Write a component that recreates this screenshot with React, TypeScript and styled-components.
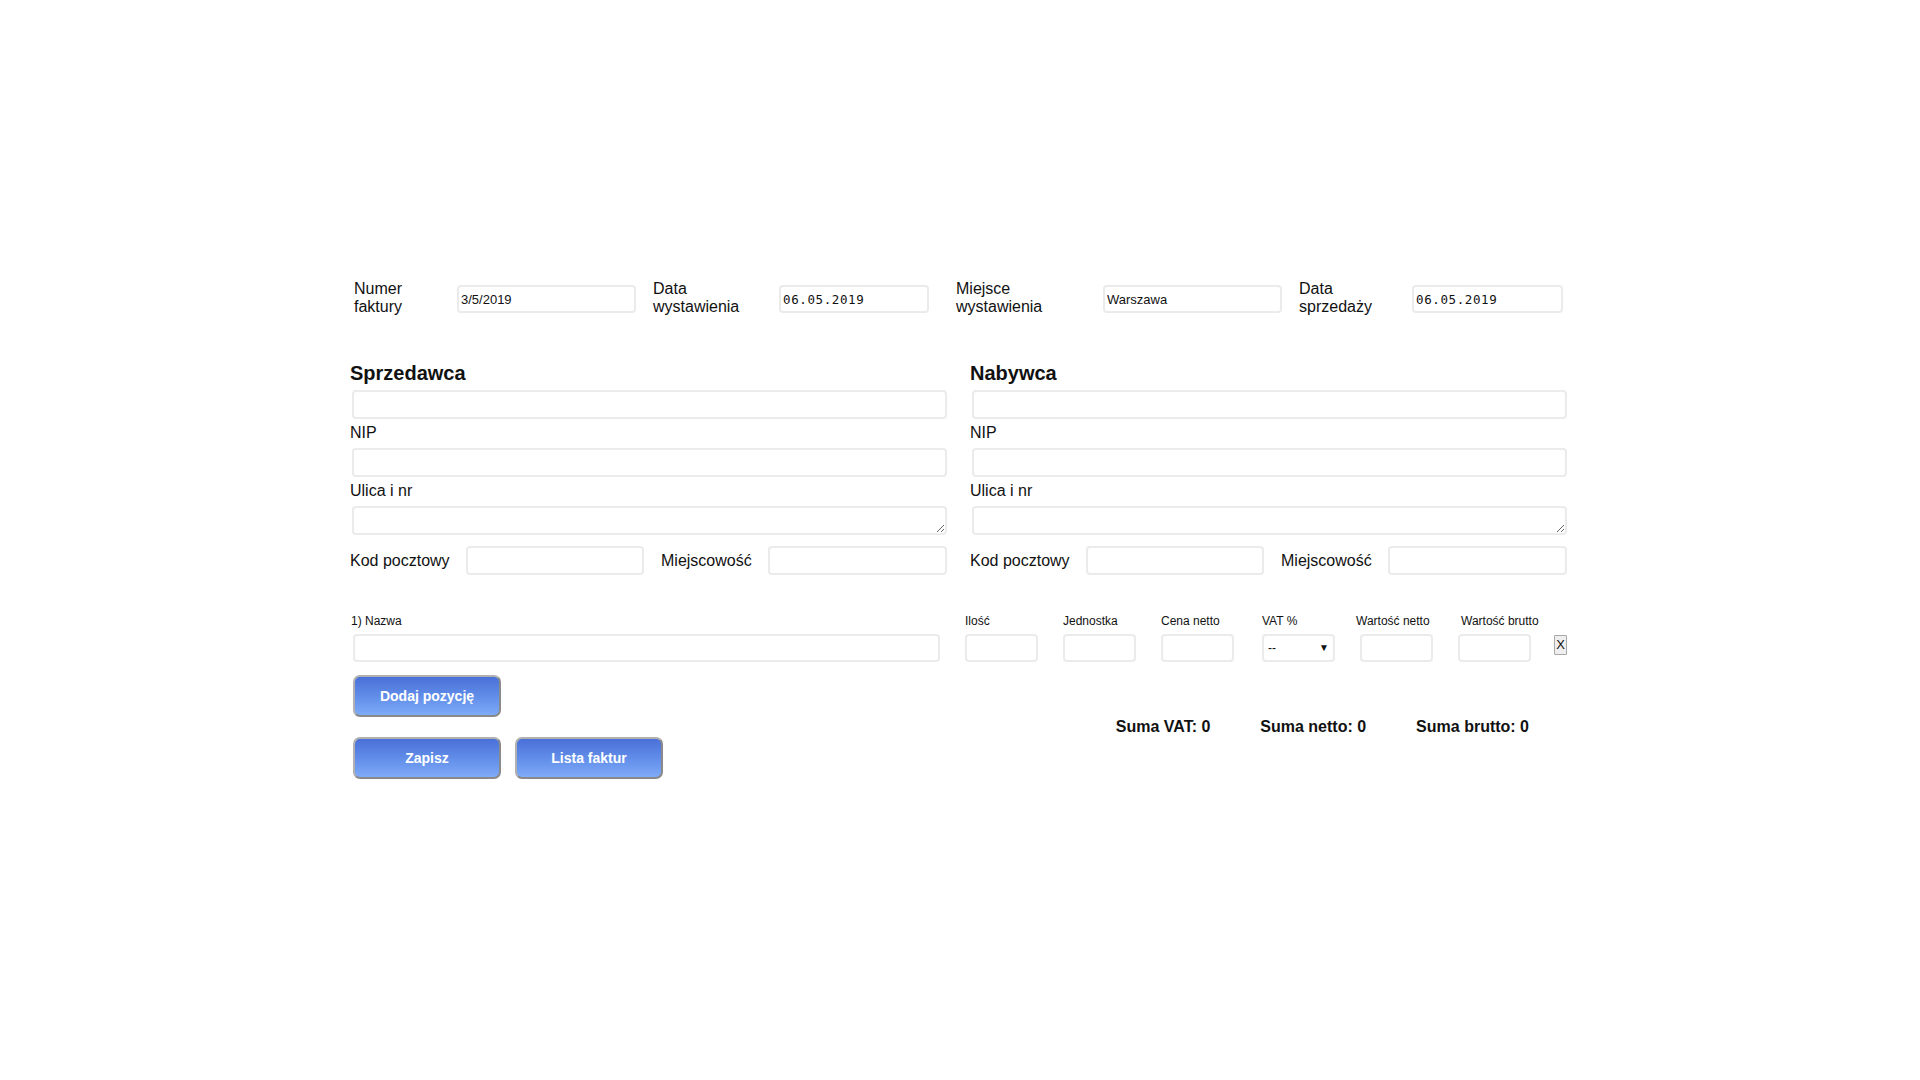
import React from "react";
import styled, { createGlobalStyle, css } from "styled-components";

const GlobalStyle = createGlobalStyle`
  html, body { margin: 0; padding: 0; background: #ffffff; }
  body { font-family: "Liberation Sans", Arial, sans-serif; color: #111111; }
  * { box-sizing: border-box; }
`;

const Page = styled.div`
  width: 1220px;
  margin: 0 auto;
  padding-top: 279px;
`;

const fieldBase = css`
  border: 2px solid #ebebeb;
  border-radius: 4px;
  background: #ffffff;
  color: #111111;
  font-family: "Liberation Sans", Arial, sans-serif;
  font-size: 13px;
  padding: 1px 2px;
  outline: none;
  min-width: 0;
`;

/* ---------- top row ---------- */
const TopRow = styled.div`
  display: flex;
  align-items: center;
  padding-left: 4px;
  height: 36px;
`;

const TopLabel = styled.label<{ $w: number }>`
  flex: 0 0 ${(p) => p.$w}px;
  width: ${(p) => p.$w}px;
  font-size: 16px;
  line-height: 18px;
  padding-top: 2px;
`;

const TopInput = styled.input<{ $w: number; $mono?: boolean; $after?: number }>`
  ${fieldBase};
  flex: 0 0 ${(p) => p.$w}px;
  width: ${(p) => p.$w}px;
  height: 28px;
  margin-top: 4px;
  margin-right: ${(p) => p.$after ?? 0}px;
  ${(p) =>
    p.$mono &&
    css`
      font-family: "DejaVu Sans Mono", "Liberation Mono", monospace;
      font-size: 12.5px;
      letter-spacing: 0.6px;
      padding-left: 2px;
    `}
`;

/* ---------- parties ---------- */
const Parties = styled.div`
  display: grid;
  grid-template-columns: 598px 598px;
  column-gap: 22px;
  margin-top: 47px;
`;

const Party = styled.section`
  display: flex;
  flex-direction: column;
`;

const Heading = styled.h2`
  margin: 0 0 5px 0;
  font-size: 20px;
  line-height: 23px;
  font-weight: bold;
`;

const FieldLabel = styled.label`
  display: block;
  font-size: 16px;
  line-height: 18px;
  margin: 5px 0 6px 0;
`;

const WideInput = styled.input`
  ${fieldBase};
  display: block;
  width: 595px;
  height: 29px;
  margin-left: 2px;
`;

const WideArea = styled.textarea`
  ${fieldBase};
  display: block;
  width: 595px;
  height: 29px;
  margin-left: 2px;
  resize: vertical;
`;

const CityRow = styled.div`
  display: flex;
  align-items: center;
  margin-top: 11px;
`;

const InlineLabel = styled.label<{ $w: number }>`
  flex: 0 0 ${(p) => p.$w}px;
  width: ${(p) => p.$w}px;
  font-size: 16px;
  line-height: 18px;
`;

const SmallInput = styled.input<{ $w: number; $after?: number }>`
  ${fieldBase};
  flex: 0 0 ${(p) => p.$w}px;
  width: ${(p) => p.$w}px;
  height: 29px;
  margin-right: ${(p) => p.$after ?? 0}px;
`;

/* ---------- items ---------- */
const ItemsRow = styled.div`
  display: flex;
  gap: 25px;
  margin-top: 39px;
  padding-left: 1px;
`;

const ItemCol = styled.div<{ $w: number; $shift?: number }>`
  display: flex;
  flex-direction: column;
  flex: 0 0 ${(p) => p.$w}px;
  width: ${(p) => p.$w}px;
  margin-left: ${(p) => p.$shift ?? 0}px;
`;

const ItemLabel = styled.label<{ $nudge?: number }>`
  font-size: 12px;
  line-height: 14px;
  height: 14px;
  margin-bottom: 6px;
  white-space: nowrap;
  margin-left: ${(p) => p.$nudge ?? 0}px;
`;

const ItemInput = styled.input<{ $indent?: number }>`
  ${fieldBase};
  height: 28px;
  width: 100%;
  margin-left: ${(p) => p.$indent ?? 0}px;
`;

const NameInput = styled(ItemInput)`
  width: 587px;
`;

const SelectWrap = styled.div`
  position: relative;
  width: 100%;
  height: 28px;
`;

const VatSelect = styled.select`
  ${fieldBase};
  appearance: none;
  -webkit-appearance: none;
  width: 100%;
  height: 28px;
  font-size: 12px;
  padding-left: 4px;
`;

const Caret = styled.span`
  position: absolute;
  right: 6px;
  top: 8px;
  font-size: 10px;
  line-height: 12px;
  color: #111;
  pointer-events: none;
`;

const RemoveButton = styled.button`
  margin-top: 1px;
  width: 13px;
  height: 20px;
  padding: 0;
  font-family: "Liberation Sans", Arial, sans-serif;
  font-size: 13px;
  line-height: 16px;
  color: #111;
  background: #efefef;
  border: 1px solid #a8a8a8;
  border-radius: 1px;
`;

/* ---------- buttons & sums ---------- */
const BlueButton = styled.button`
  width: 148px;
  height: 42px;
  border: 2px solid #b0b0b0;
  border-right-color: #8a8a8a;
  border-bottom-color: #8a8a8a;
  border-radius: 7px;
  background: linear-gradient(to bottom, #4a70d8 0%, #6390ea 55%, #7eaaf8 100%);
  color: #ffffff;
  font-family: "Liberation Sans", Arial, sans-serif;
  font-weight: bold;
  font-size: 14px;
  cursor: pointer;
`;

const AddRow = styled.div`
  margin-top: 13px;
  padding-left: 3px;
`;

const SumsRow = styled.div`
  display: flex;
  justify-content: flex-end;
  gap: 50px;
  height: 20px;
  padding-top: 1px;
  padding-right: 41px;
`;

const Sum = styled.span`
  font-size: 16px;
  font-weight: bold;
  line-height: 18px;
`;

const ActionsRow = styled.div`
  display: flex;
  gap: 14px;
  padding-left: 3px;
`;

const PartyForm: React.FC<{ title: string }> = ({ title }) => (
  <Party>
    <Heading>{title}</Heading>
    <WideInput />
    <FieldLabel>NIP</FieldLabel>
    <WideInput />
    <FieldLabel>Ulica i nr</FieldLabel>
    <WideArea rows={1} />
    <CityRow>
      <InlineLabel $w={116}>Kod pocztowy</InlineLabel>
      <SmallInput $w={178} $after={17} />
      <InlineLabel $w={107}>Miejscowość</InlineLabel>
      <SmallInput $w={179} />
    </CityRow>
  </Party>
);

const columns = ["Ilość", "Jednostka", "Cena netto"];
const valueColumns: { label: string; nudge: number }[] = [
  { label: "Wartość netto", nudge: -4 },
  { label: "Wartość brutto", nudge: 3 },
];

export default function App() {
  return (
    <>
      <GlobalStyle />
      <Page>
        <TopRow>
          <TopLabel $w={103}>
            Numer
            <br />
            faktury
          </TopLabel>
          <TopInput $w={179} $after={17} defaultValue="3/5/2019" />
          <TopLabel $w={126}>
            Data
            <br />
            wystawienia
          </TopLabel>
          <TopInput $w={150} $after={27} $mono defaultValue="06.05.2019" />
          <TopLabel $w={147}>
            Miejsce
            <br />
            wystawienia
          </TopLabel>
          <TopInput $w={179} $after={17} defaultValue="Warszawa" />
          <TopLabel $w={113}>
            Data
            <br />
            sprzedaży
          </TopLabel>
          <TopInput $w={151} $mono defaultValue="06.05.2019" />
        </TopRow>

        <Parties>
          <PartyForm title="Sprzedawca" />
          <PartyForm title="Nabywca" />
        </Parties>

        <ItemsRow>
          <ItemCol $w={589}>
            <ItemLabel>1) Nazwa</ItemLabel>
            <NameInput $indent={2} />
          </ItemCol>
          {columns.map((c) => (
            <ItemCol $w={73} key={c}>
              <ItemLabel>{c}</ItemLabel>
              <ItemInput />
            </ItemCol>
          ))}
          <ItemCol $w={73} $shift={3}>
            <ItemLabel>VAT %</ItemLabel>
            <SelectWrap>
              <VatSelect defaultValue="--">
                <option value="--">--</option>
                <option value="23">23</option>
                <option value="8">8</option>
                <option value="5">5</option>
                <option value="0">0</option>
              </VatSelect>
              <Caret>▼</Caret>
            </SelectWrap>
          </ItemCol>
          {valueColumns.map((c) => (
            <ItemCol $w={73} key={c.label}>
              <ItemLabel $nudge={c.nudge}>{c.label}</ItemLabel>
              <ItemInput />
            </ItemCol>
          ))}
          <ItemCol $w={13} $shift={-2}>
            <ItemLabel />
            <RemoveButton>X</RemoveButton>
          </ItemCol>
        </ItemsRow>

        <AddRow>
          <BlueButton>Dodaj pozycję</BlueButton>
        </AddRow>

        <SumsRow>
          <Sum>Suma VAT: 0</Sum>
          <Sum>Suma netto: 0</Sum>
          <Sum>Suma brutto: 0</Sum>
        </SumsRow>

        <ActionsRow>
          <BlueButton>Zapisz</BlueButton>
          <BlueButton>Lista faktur</BlueButton>
        </ActionsRow>
      </Page>
    </>
  );
}
